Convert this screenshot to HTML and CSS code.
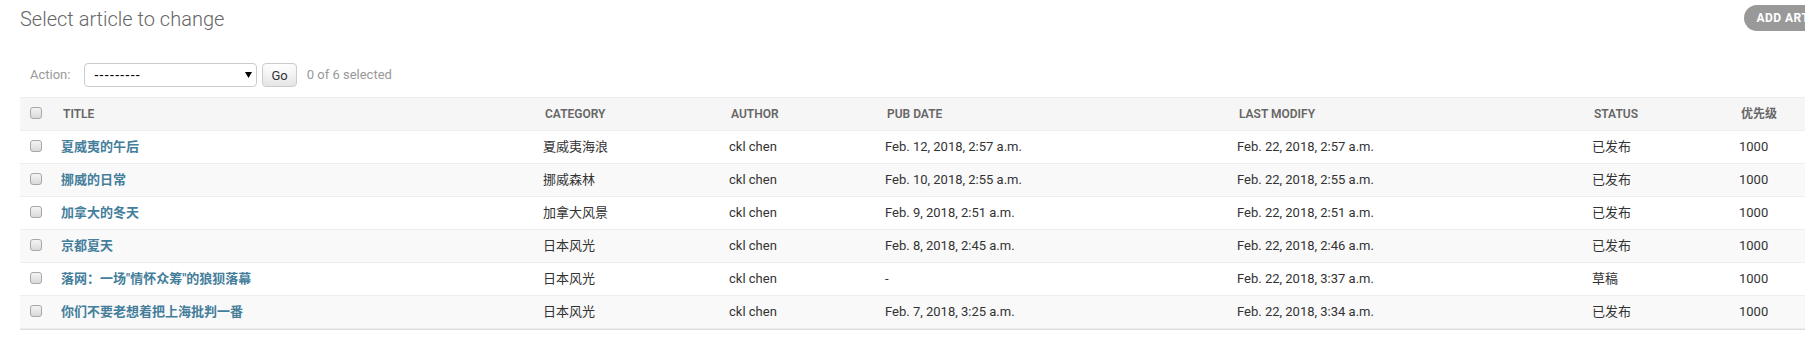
FILE: index.html
```html
<!DOCTYPE html>
<html lang="en">
<head>
  <meta charset="UTF-8">
  <meta name="viewport" content="width=device-width, initial-scale=1.0">
  <title>Select article to change</title>
  <link rel="stylesheet" href="styles.css">
</head>
<body>
  <div id="content">
    <div class="page-head">
      <h1>Select article to change</h1>
      <a class="addlink" href="#">Add article</a>
    </div>
    <form id="changelist-form">
      <div class="actions">
        <label>Action:</label>
        <div class="select">
          <span>---------</span>
          <svg width="7" height="6" viewBox="0 0 7 6"><path d="M0 0h7L3.5 6z" fill="#000"/></svg>
        </div>
        <button class="button" type="button">Go</button>
        <span class="action-counter">0 of 6 selected</span>
      </div>
      <table id="result_list">
        <colgroup>
          <col style="width:33px"><col style="width:482px"><col style="width:186px"><col style="width:156px">
          <col style="width:352px"><col style="width:355px"><col style="width:147px"><col style="width:117px">
        </colgroup>
        <thead>
          <tr>
            <th class="action-checkbox"><input type="checkbox"></th>
            <th>Title</th>
            <th>Category</th>
            <th>Author</th>
            <th>Pub date</th>
            <th>Last modify</th>
            <th>Status</th>
            <th>优先级</th>
          </tr>
        </thead>
        <tbody>
          <tr>
            <td class="action-checkbox"><input type="checkbox"></td>
            <th><a href="#">夏威夷的午后</a></th>
            <td>夏威夷海浪</td><td>ckl chen</td>
            <td>Feb. 12, 2018, 2:57 a.m.</td><td>Feb. 22, 2018, 2:57 a.m.</td>
            <td>已发布</td><td>1000</td>
          </tr>
          <tr>
            <td class="action-checkbox"><input type="checkbox"></td>
            <th><a href="#">挪威的日常</a></th>
            <td>挪威森林</td><td>ckl chen</td>
            <td>Feb. 10, 2018, 2:55 a.m.</td><td>Feb. 22, 2018, 2:55 a.m.</td>
            <td>已发布</td><td>1000</td>
          </tr>
          <tr>
            <td class="action-checkbox"><input type="checkbox"></td>
            <th><a href="#">加拿大的冬天</a></th>
            <td>加拿大风景</td><td>ckl chen</td>
            <td>Feb. 9, 2018, 2:51 a.m.</td><td>Feb. 22, 2018, 2:51 a.m.</td>
            <td>已发布</td><td>1000</td>
          </tr>
          <tr>
            <td class="action-checkbox"><input type="checkbox"></td>
            <th><a href="#">京都夏天</a></th>
            <td>日本风光</td><td>ckl chen</td>
            <td>Feb. 8, 2018, 2:45 a.m.</td><td>Feb. 22, 2018, 2:46 a.m.</td>
            <td>已发布</td><td>1000</td>
          </tr>
          <tr>
            <td class="action-checkbox"><input type="checkbox"></td>
            <th><a href="#">落网：一场"情怀众筹"的狼狈落幕</a></th>
            <td>日本风光</td><td>ckl chen</td>
            <td>-</td><td>Feb. 22, 2018, 3:37 a.m.</td>
            <td>草稿</td><td>1000</td>
          </tr>
          <tr>
            <td class="action-checkbox"><input type="checkbox"></td>
            <th><a href="#">你们不要老想着把上海批判一番</a></th>
            <td>日本风光</td><td>ckl chen</td>
            <td>Feb. 7, 2018, 3:25 a.m.</td><td>Feb. 22, 2018, 3:34 a.m.</td>
            <td>已发布</td><td>1000</td>
          </tr>
        </tbody>
      </table>
      <div class="paginator"></div>
    </form>
  </div>
</body>
</html>
```

FILE: styles.css
```css
* { box-sizing: border-box; }
html, body { overflow: hidden; }
body { margin: 0; font-family: Roboto, "Noto Sans CJK SC", sans-serif; font-size: 13px; color: #333; background: #fff; }
#content { width: 1868px; padding: 5px 20px 0; }
.page-head { display: flex; justify-content: space-between; align-items: flex-start; }
h1 { margin: 2px 0 22px; font-size: 20px; line-height: 24px; font-weight: 300; color: #666; }
.addlink { display: block; height: 26px; line-height: 26px; padding: 0 12px; background: #999; color: #fff; border-radius: 15px; font-size: 12px; font-weight: 700; letter-spacing: 0.5px; text-transform: uppercase; text-decoration: none; }
.actions { display: flex; align-items: center; height: 44px; padding: 10px; line-height: 24px; }
.actions label { color: #999; }
.select { display: flex; align-items: center; justify-content: space-between; width: 173px; height: 24px; margin-left: 14px; padding: 0 4px 0 9px; border: 1px solid #ccc; border-radius: 4px; color: #000; font-size: 14px; letter-spacing: 1.3px; }
.button { height: 24px; margin-left: 5px; padding: 0 8px; border: 1px solid #ccc; border-radius: 4px; background: #fff; box-shadow: 0 -15px 20px -10px rgba(0, 0, 0, 0.15) inset; font: 13px Roboto, sans-serif; color: #333; cursor: pointer; }
.action-counter { margin-left: 10px; color: #999; }
#result_list { width: 1828px; border-collapse: collapse; table-layout: fixed; }
#result_list th, #result_list td { padding: 8px; line-height: 16px; font-size: 13px; text-align: left; vertical-align: top; border-bottom: 1px solid #eee; white-space: nowrap; }
#result_list thead th { padding: 8px 10px; background: #f6f6f6; border-top: 1px solid #eee; color: #666; font-size: 12px; font-weight: 600; text-transform: uppercase; }
#result_list tbody th { font-weight: 700; }
#result_list tbody tr:nth-child(even) { background: #f9f9f9; }
#result_list a { color: #447e9b; text-decoration: none; }
#result_list .action-checkbox { padding: 8px 0 8px 10px; }
.action-checkbox input { appearance: none; display: block; width: 12px; height: 12px; margin: 1px 0 0; border: 1px solid #a8a8a8; border-radius: 3px; background: linear-gradient(#f4f4f4, #d9d9d9); }
.paginator { border-top: 1px solid #ddd; height: 16px; }
```
